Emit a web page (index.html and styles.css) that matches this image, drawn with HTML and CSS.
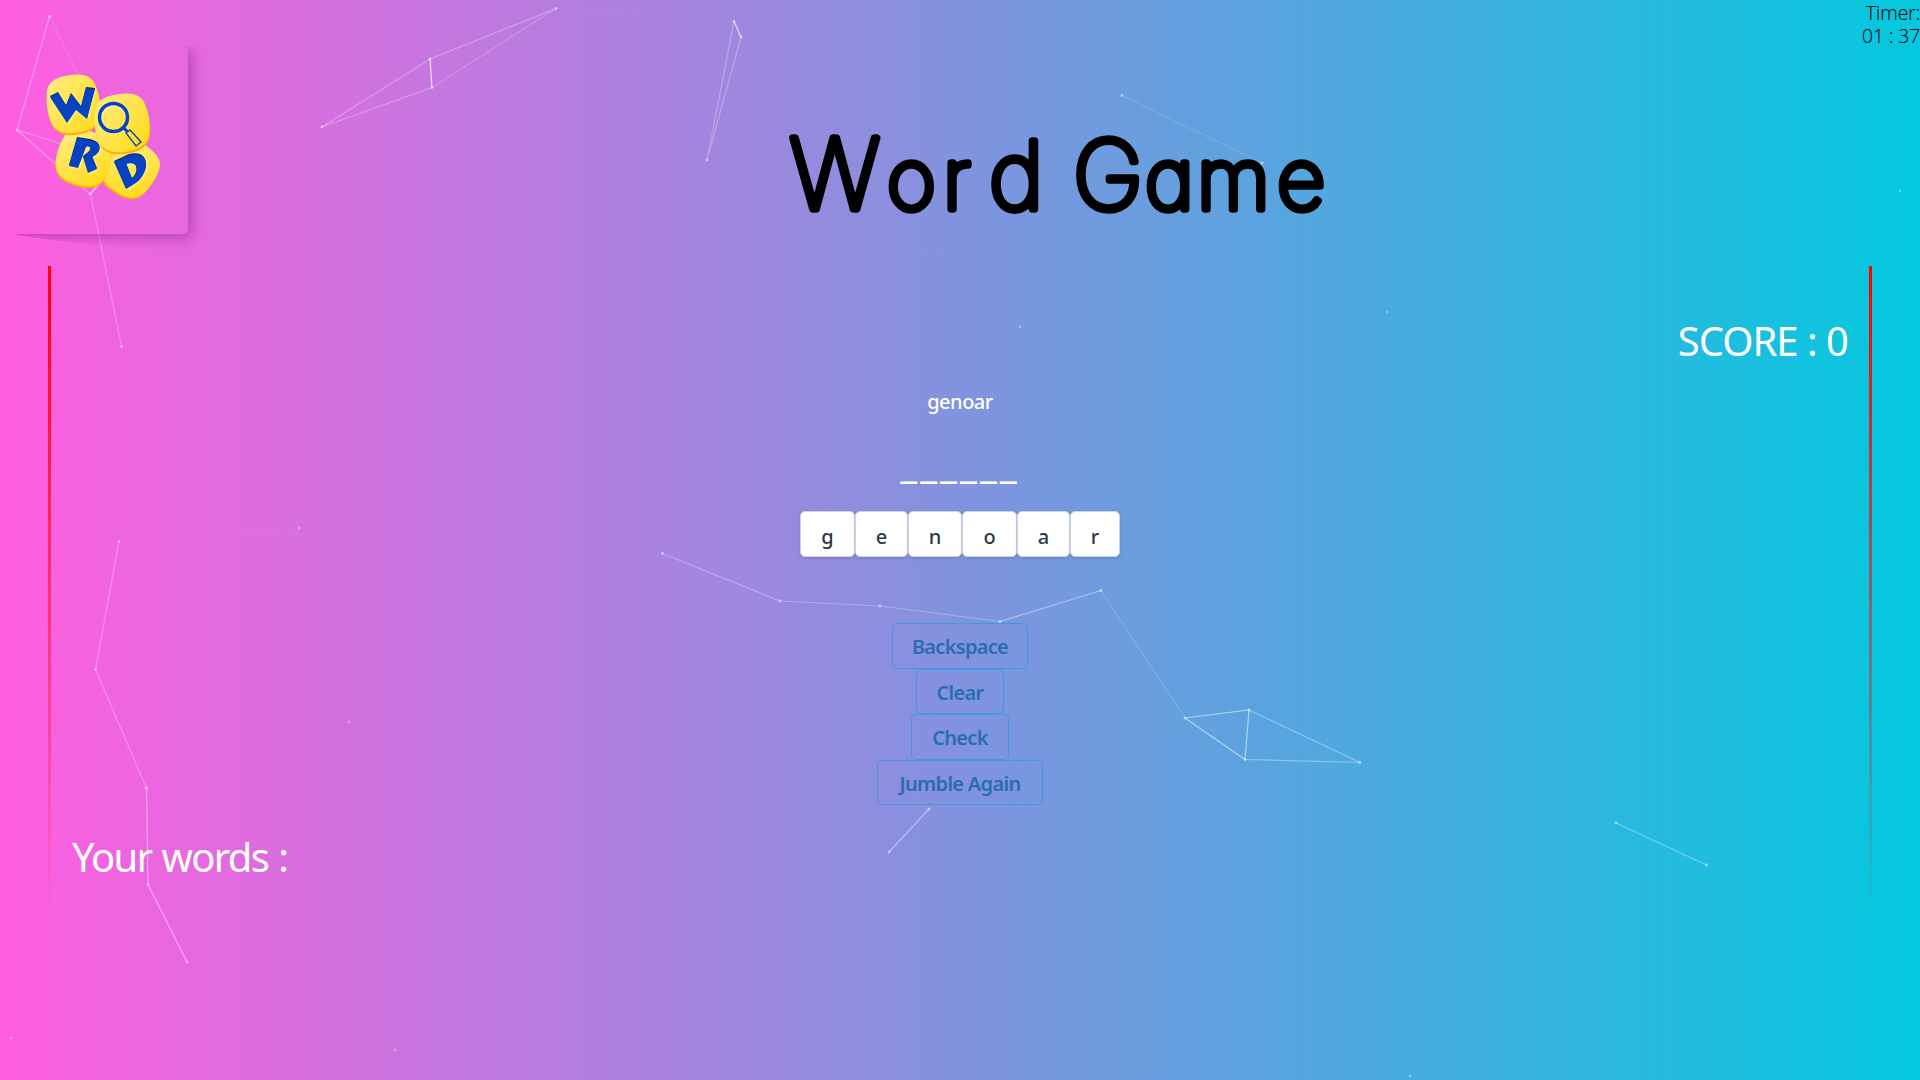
FILE: index.html
```html
<!DOCTYPE html>
<html lang="en">
<head>
<meta charset="utf-8">
<title>Word Game</title>
<link rel="stylesheet" href="styles.css">
</head>
<body>
<svg class="particles" viewBox="0 0 1920 1080" aria-hidden="true">
  <g class="links">
    <path opacity=".32" d="M49.500 16.500L17 130M17 130L98 155M17 130L90 194L98 184"/>
    <path opacity=".13" d="M49.500 16.500L90 98"/>
    <path opacity=".5" d="M90.500 194L102 181"/>
    <path opacity=".25" d="M90.500 194L121.500 346.500"/>
    <path opacity=".3" d="M322 127L430 59L556 8.500M322 127L432 87.500"/>
    <path opacity=".2" d="M432 87.500L556 8.500"/>
    <path opacity=".72" d="M430 59L432 87.500M734 21.500L741 37"/>
    <path opacity=".035" d="M556 8.500L734 21.500M119 541.500L299 528M146 788L187 962M1163 718L1360 763"/>
    <path opacity=".27" d="M734 21.500L707 160L741 37"/>
    <path opacity=".15" d="M1122 95.500L1262 163"/>
    <path opacity=".28" d="M119 541.500L95.500 669.500L146.500 788M662.500 553.500L780 601L880 606L1000 621.500"/>
    <path opacity=".4" d="M146.500 788L148 884.500L187 962M1000 621.500L1101 590.500M889 852L929 809"/>
    <path opacity=".16" d="M1101 590.500L1185 718"/>
    <path opacity=".5" d="M1185 718L1249 710L1245 759.500L1185 718"/>
    <path opacity=".35" d="M1249 710L1360 762.500L1245 759.500M1616 823L1706.500 865"/>
  </g>
  <path class="dots" d="M49.500 16.500h0M17 130h0M90.500 194h0M121.500 346.500h0M322 127h0M430 59h0M432 87.500h0M556 8.500h0M734 21.500h0M741 37h0M707 160h0M1122 95.500h0M1262 163h0M119 541.500h0M95.500 669.500h0M146.500 788h0M148 884.500h0M187 962h0M662.500 553.500h0M780 601h0M880 606h0M1000 621.500h0M1101 590.500h0M1185 718h0M1249 710h0M1245 759.500h0M1360 762.500h0M1616 823h0M1706.500 865h0M889 852h0M929 809h0"/>
  <path class="dots faint" d="M1900 191h0M1387 312h0M1020 327h0M299 528h0M349 722h0M395 1050h0M11 1038h0M1410 1076h0"/>
</svg>

<header class="header">
  <div class="logo">
    <svg viewBox="0 0 188 188" role="img" aria-label="Word logo">
      <defs>
        <linearGradient id="tile" x1="0" y1="0" x2="1" y2="1">
          <stop offset="0" stop-color="#ffef8a"/><stop offset="1" stop-color="#ffd80f"/>
        </linearGradient>
        <path id="blob" d="M0-29C16-29 25-25 27-13C29-4 29 6 27 14C24 25 14 29 0 29C-14 29-24 25-27 14C-29 6-29-4-27-13C-25-25-16-29 0-29Z"/>
        <g id="piece"><use href="#blob" y="2" fill="#ffa90a"/><use href="#blob" fill="url(#tile)"/></g>
      </defs>
      <use href="#piece" transform="translate(130 122) rotate(35) scale(.95)"/>
      <use href="#piece" transform="translate(84 112) rotate(16) scale(.95)"/>
      <use href="#piece" transform="translate(73.500 58) rotate(-9) scale(.93 1)"/>
      <use href="#piece" transform="translate(122 77) rotate(-8) scale(.96 1)"/>
      <g class="glyphs">
        <path d="M50 51L58 47L66 60L71 48L81 61L86 42L95 43L87 73L76 64L67 77Z"/>
        <path fill-rule="evenodd" d="M77 92L90 94C103 97 102 107 92 111L97 123L88 127L83 111L87 108C92 105 91 99 86 101L78 122L69 120Z"/>
        <path fill-rule="evenodd" d="M114 116L129 109C145 105 149 117 144 127C140 136 134 138 126 143ZM126 118L132 133C139 127 139 114 126 118Z"/>
      </g>
      <circle cx="113.500" cy="73.500" r="13.500" fill="none" stroke="#fff" stroke-opacity=".4" stroke-width="3"/>
      <circle cx="113.500" cy="71.500" r="14" fill="none" stroke="#0742c2" stroke-width="3.500"/>
      <path d="M123.500 82L128 86" stroke="#0742c2" stroke-width="3"/>
      <path d="M126 87L130 84L141 96L136 100Z" fill="none" stroke="#174bb4" stroke-width="1.500"/>
    </svg>
  </div>
  <h1 class="title">
    <svg viewBox="0 0 560 130">
      <text x="9.7 107 163 209 270 293 365 417 497" y="89">W<tspan class="small">or</tspan><tspan class="tall">d</tspan> <tspan class="cap">G</tspan><tspan class="small">ame</tspan></text>
    </svg>
  </h1>
  <div class="timer"><span>Timer:</span><span>01 : 37</span></div>
</header>

<main class="board">
  <div class="score">SCORE : 0</div>
  <div class="play">
    <p class="jumbled">genoar</p>
    <p class="blanks">______</p>
    <div class="letters">
      <button>g</button><button>e</button><button>n</button><button>o</button><button>a</button><button>r</button>
    </div>
    <div class="actions">
      <button class="backspace">Backspace</button>
      <button class="clear">Clear</button>
      <button class="check">Check</button>
      <button class="jumble">Jumble Again</button>
    </div>
  </div>
  <div class="words">Your words :</div>
</main>
</body>
</html>
```
FILE: styles.css
```css
* { box-sizing: border-box; }
body {
  margin: 0;
  height: 1080px;
  overflow: hidden;
  position: relative;
  font: 20px/23px "Noto Sans", "Open Sans", sans-serif;
  color: #fff;
  background: linear-gradient(to right, #ff5edf 0%, #04c8de 100%);
}
p, h1 { margin: 0; font-weight: 400; }
button { font: inherit; margin: 0; padding: 0; }

.particles { position: absolute; inset: 0; width: 1920px; height: 1080px; z-index: -1; }
.links { fill: none; stroke: #fff; stroke-width: 1.250; }
.dots { stroke: #fff; stroke-width: 2.800; stroke-linecap: round; opacity: .5; }
.faint { opacity: .3; }

.header { display: flex; height: 266px; }
.logo { position: relative; width: 188px; height: 188px; margin-top: 46px; }
.logo::before {
  content: "";
  position: absolute;
  inset: 0;
  border-radius: 5px;
  box-shadow: 4px 4px 13px rgba(70, 0, 90, .32);
  clip-path: polygon(13px 188px, 30px 191px, 60px 195px, 110px 200px, 170px 210px, 215px 210px, 215px 0, 184px 0, 184px 184px, 180px 188px);
}
.logo svg { display: block; width: 188px; height: 188px; }
.glyphs { fill: #0742c2; filter: drop-shadow(0 -1px 0 #05245c) drop-shadow(1px 1px 1px #fff8); }

.title { width: 560px; margin: 120px auto 0 592px; height: 130px; }
.title svg { display: block; overflow: visible; width: 560px; height: 130px; }
.title text {
  font: 100 97px Inter, sans-serif;
  font-feature-settings: "cv11";
  fill: #000;
  stroke: #000;
  stroke-width: 7.500px;
  stroke-linejoin: round;
}
.title .small { font-size: 84px; }
.title .tall { font-size: 94px; }
.title .cap { font-size: 95px; }

.timer {
  display: flex;
  flex-direction: column;
  align-items: flex-end;
  padding-top: 1px;
  color: #111;
  font-weight: 300;
  letter-spacing: -.4px;
  white-space: nowrap;
}

.board {
  display: flex;
  flex-direction: column;
  height: 652px;
  margin: 0 48px;
  padding: 50px 21px 0;
  border: 0 solid;
  border-width: 0 3px;
  border-image: linear-gradient(to bottom, red, transparent) 1 100%;
}
.score, .words { font-size: 40px; line-height: 50px; }
.score { text-align: right; letter-spacing: -1px; }
.words { margin-top: 27px; letter-spacing: -1.700px; word-spacing: 1.500px; }

.play { display: flex; flex-direction: column; align-items: center; padding-top: 21px; }
.jumbled { height: 30px; line-height: 30px; letter-spacing: -.5px; font-weight: 500; }
.blanks { height: 94px; padding-top: 21px; font-size: 40px; font-weight: 600; line-height: 50px; letter-spacing: 3px; }
.letters { display: grid; grid-template-columns: 55px 53px 54px 55px 53px 50px; height: 46px; }
.letters button {
  border: 1px solid #cbd5e0;
  border-radius: 5px;
  background: #fff;
  color: #2d3748;
  font-weight: 500;
  padding-top: 4px;
  box-shadow: 0 1px 3px rgba(0, 0, 0, .15);
}
.actions { display: flex; flex-direction: column; align-items: center; margin-top: 66px; }
.actions button {
  height: 45.500px;
  border: 1px solid #4299e1;
  border-radius: 5px;
  background: transparent;
  color: #2b6cb0;
  font-weight: 600;
  padding-top: 2px;
  letter-spacing: -.7px;
}
.backspace { width: 136px; }
.clear { width: 88px; }
.check { width: 98px; }
.jumble { width: 166px; }
```
